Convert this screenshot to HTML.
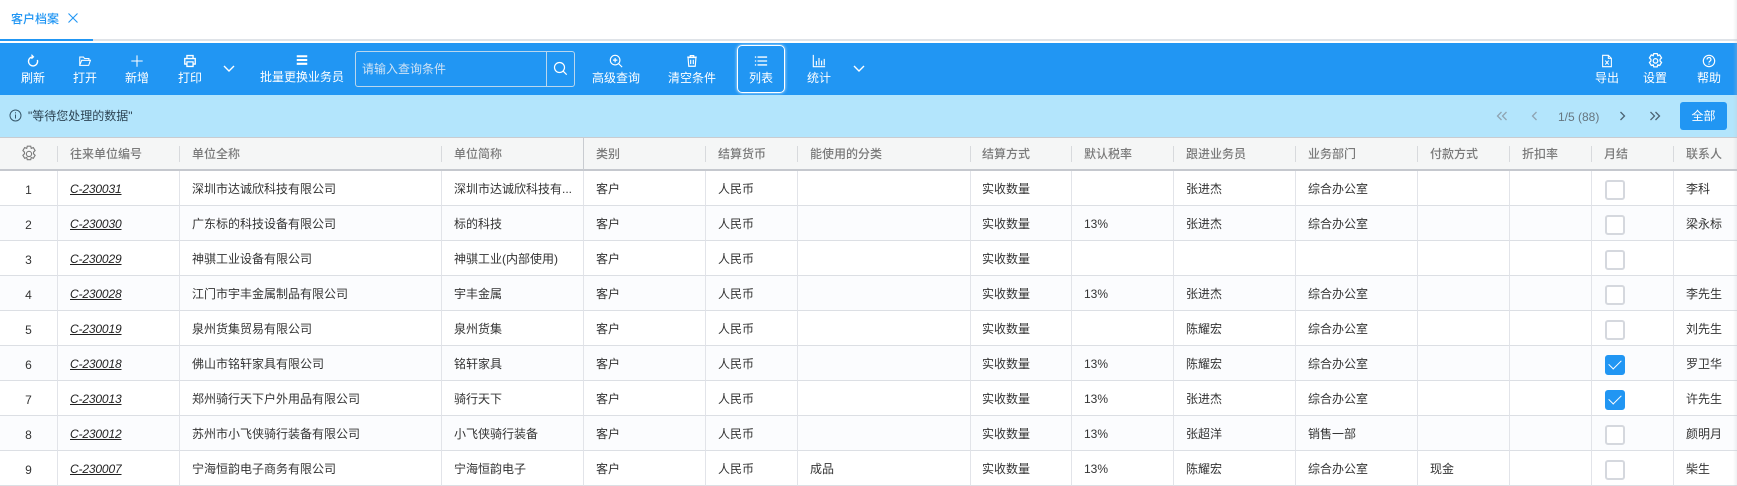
<!DOCTYPE html>
<html><head><meta charset="utf-8"><style>
*{box-sizing:border-box}
html,body{margin:0;padding:0;width:1737px;height:486px;overflow:hidden;background:#fff;font:12px/16px "Liberation Sans","Noto Sans CJK SC",sans-serif;color:#333}
.a{position:absolute}
#tb{position:absolute;left:0;top:43px;width:1737px;height:52px;background:#2196f3;color:#fff}
.it{position:absolute;top:27px;width:100px;margin-left:-50px;text-align:center;line-height:16px;white-space:nowrap}
.ic{position:absolute;width:14px;height:14px;margin-left:-7px;top:11px;fill:none;stroke:#fff;stroke-width:1.2}
#hd{position:absolute;left:0;top:137px;width:1737px;height:34px;background:#f5f6f6;border-top:1px solid #c9ccd1;border-bottom:2px solid #c5c8ce;color:#7a7a7a;font-weight:500}
#hd span{position:absolute;top:8px;white-space:nowrap}
#hd i{position:absolute;top:8px;width:1px;height:16px;background:#d8dadd}
table{position:absolute;left:0;top:171px;width:1737px;border-collapse:separate;border-spacing:0;table-layout:fixed;color:#333}
td{height:35px;padding:1px 12px 0 12px;border-left:1px solid #e2e4e9;border-bottom:1px solid #dcdfe4;white-space:nowrap;overflow:hidden;vertical-align:middle}
td:first-child{border-left:0;text-align:center;padding:4px 0 0}
td:nth-child(8){padding-left:11px}
tr:nth-child(even) td{background:#fbfcfe}
td u{font-style:italic;color:#222;letter-spacing:-.15px}
b{display:block;width:20px;height:20px;border:2px solid #d5d8de;border-radius:3px;background:#fff;margin:3px 0 0 1px}
b.c{background:#2196f3;border-color:#2196f3;position:relative}
b.c:after{content:"";position:absolute;left:2px;top:1px;width:11px;height:6px;border-left:1.4px solid #fff;border-bottom:1.4px solid #fff;transform:rotate(-45deg) translate(-1px,1px);}
</style></head><body>

<div class="a" style="left:11px;top:11px;color:#2196f3;font-weight:500">客户档案</div>
<svg class="a" style="left:67px;top:12px" width="12" height="12" fill="none" stroke="#2196f3" stroke-width="1.1"><path d="M1.5 1.5l9 9M10.5 1.5l-9 9"/></svg>
<div class="a" style="left:0;top:39px;width:1737px;height:2px;background:#dfe3e8"></div>
<div class="a" style="left:0;top:39px;width:93px;height:2px;background:#2196f3"></div>

<div id="tb">
<svg class="ic" style="left:33px" viewBox="0 0 16 16"><path d="M8 3.2a5.2 5.2 0 1 0 5 3.6" stroke-width="1.5"/><path d="M6.2 .8 8.6 3.2 6.2 5.4" stroke-width="1.3"/></svg>
<div class="it" style="left:33px">刷新</div>
<svg class="ic" style="left:85px" viewBox="0 0 16 16"><path d="M2 13V3.5h4.2l1.3 1.6h5V7.2M2 13h10.2l2-5.8H4.200L2 13z"/></svg>
<div class="it" style="left:85px">打开</div>
<svg class="ic" style="left:137px" viewBox="0 0 16 16"><path d="M8 1.500v13M1.500 8h13"/></svg>
<div class="it" style="left:137px">新增</div>
<svg class="ic" style="left:190px" viewBox="0 0 16 16"><path d="M4.500 5V1.800h7V5M4.500 11.500H2V5.200h12v6.300h-2.500M4.500 9h7v5.200h-7z" stroke-width="1.5"/></svg>
<div class="it" style="left:190px">打印</div>
<svg class="a" style="left:222px;top:21px" width="14" height="10" fill="none" stroke="#fff" stroke-width="1.4"><path d="M2 2l5 5 5-5"/></svg>
<svg class="ic" style="left:302px;top:10px" viewBox="0 0 16 16"><path d="M2 2.500h12v2.400H2zM2 6.800h12v2.400H2zM2 11.100h12v2.400H2z" fill="#fff" stroke="none"/></svg>
<div class="it" style="left:302px;top:26px">批量更换业务员</div>
<div class="a" style="left:355px;top:8px;width:220px;height:36px;border:1px solid #b9d7ee;border-radius:3px"></div>
<div class="a" style="left:546px;top:8px;width:1px;height:36px;background:#b9d7ee"></div>
<div class="a" style="left:362px;top:18px;color:#cfe3f5">请输入查询条件</div>
<svg class="a" style="left:553px;top:18px" width="15" height="15" fill="none" stroke="#fff" stroke-width="1.200"><circle cx="6.500" cy="6.500" r="5"/><path d="M10.200 10.200l3.500 3.500"/></svg>

<svg class="ic" style="left:616px" viewBox="0 0 16 16"><circle cx="7" cy="7" r="5.500" stroke-width="1.300"/><path d="M11 11l4 4M7 4.500v5M4.500 7h5" stroke-width="1.300"/></svg>
<div class="it" style="left:616px">高级查询</div>
<svg class="ic" style="left:692px" viewBox="0 0 16 16"><path d="M3.500 4h9l-.8 10H4.300zM2.500 3.500h11M6 3V1.800h4V3M6.500 6.500v5M9.500 6.500v5" stroke-width="1.300"/></svg>
<div class="it" style="left:692px">清空条件</div>
<div class="a" style="left:737px;top:2px;width:47.500px;height:47.500px;border:1.500px solid #fff;border-radius:5px;box-shadow:0 0 3px #cfeaff"></div>
<svg class="ic" style="left:761px" viewBox="0 0 16 16"><path d="M1 3.500h1.500M4 3.500h11M1 8h1.500M4 8h11M1 12.500h1.500M4 12.500h11" stroke-width="1.500"/></svg>
<div class="it" style="left:761px">列表</div>
<svg class="ic" style="left:819px" viewBox="0 0 16 16"><path d="M1.500 1v13.500H15" stroke-width="1.300"/><path d="M5 13V8M8 13V4.500M11 13V7.500M14 13V5.500" stroke-width="1.300"/></svg>
<div class="it" style="left:819px">统计</div>
<svg class="a" style="left:852px;top:21px" width="14" height="10" fill="none" stroke="#fff" stroke-width="1.4"><path d="M2 2l5 5 5-5"/></svg>

<svg class="ic" style="left:1607px" viewBox="0 0 16 16"><path d="M3 1.500h6.500L13 5v9.500H3zM9.500 1.500V5H13" stroke-width="1.200"/><path d="M6 7.500l4 4.500M10 7.500l-4 4.500" stroke-width="1.100"/></svg>
<div class="it" style="left:1607px">导出</div>
<svg class="ic" style="left:1655px;top:10px;width:15px;height:16px;margin-left:-7.500px" viewBox="2 1 12 14"><path d="M6.500 1.500h3l.5 1.800 1.700-.6 1.600 2.600-1.300 1.300v1.400l1.300 1.300-1.600 2.600-1.700-.6-.5 1.800h-3l-.5-1.800-1.700.6-1.600-2.600 1.300-1.300V6.600L2.700 5.300l1.600-2.600 1.700.6z" stroke-width="1.100"/><circle cx="8" cy="7.900" r="2" stroke-width="1.100"/></svg>
<div class="it" style="left:1655px">设置</div>
<svg class="ic" style="left:1709px" viewBox="0 0 16 16"><circle cx="8" cy="8" r="6.500" stroke-width="1.300"/><path d="M5.800 6.300a2.200 2.200 0 1 1 3.300 1.800c-.8.500-1.100.9-1.100 1.800" stroke-width="1.300"/><path d="M8 11v1.300" stroke-width="1.300"/></svg>
<div class="it" style="left:1709px">帮助</div>
</div>

<div class="a" style="left:0;top:95px;width:1737px;height:42px;background:#b3e5fc"></div>
<svg class="a" style="left:9px;top:109px" width="13" height="13" fill="none" stroke="#37586b" stroke-width="1"><circle cx="6.500" cy="6.500" r="5.500"/><path d="M6.500 5.500v4M6.500 3.200v1.200"/></svg>
<div class="a" style="left:28px;top:108px;color:#2c4353">"等待您处理的数据"</div>
<svg class="a" style="left:1496px;top:111px" width="12" height="10" fill="none" stroke="#8fa4b2" stroke-width="1.300"><path d="M5.500 1 1.500 5l4 4M10.500 1l-4 4 4 4"/></svg>
<svg class="a" style="left:1531px;top:111px" width="7" height="10" fill="none" stroke="#8fa4b2" stroke-width="1.300"><path d="M5.500 1 1.500 5l4 4"/></svg>
<div class="a" style="left:1558px;top:109px;color:#66757f;white-space:nowrap">1/5 (88)</div>
<svg class="a" style="left:1619px;top:111px" width="7" height="10" fill="none" stroke="#4d6473" stroke-width="1.300"><path d="M1.500 1l4 4-4 4"/></svg>
<svg class="a" style="left:1649px;top:111px" width="12" height="10" fill="none" stroke="#4d6473" stroke-width="1.300"><path d="M1.500 1l4 4-4 4M6.500 1l4 4-4 4"/></svg>
<div class="a" style="left:1680px;top:102px;width:47px;height:28px;background:#2196f3;border-radius:3px;color:#fff;text-align:center;line-height:28px">全部</div>

<div id="hd">
<svg class="a" style="left:21px;top:7px" width="16" height="17" viewBox="1.500 0 13 15" fill="none" stroke="#7c7c7c" stroke-width="1"><path d="M6.500 1h3l.5 2 1.800-.7 1.600 2.600-1.400 1.400v1.400l1.400 1.400-1.600 2.600-1.800-.7-.5 2H6.500l-.5-2-1.800.7-1.600-2.600 1.400-1.400V6.300L2.600 4.900l1.600-2.600L6 3z"/><circle cx="8" cy="7.900" r="2.300"/></svg>
<i style="left:57px"></i><span style="left:70px">往来单位编号</span>
<i style="left:179px"></i><span style="left:192px">单位全称</span>
<i style="left:441px"></i><span style="left:454px">单位简称</span>
<i style="left:583px;top:0;height:32px;background:#c9ccd1"></i><span style="left:596px">类别</span>
<i style="left:705px"></i><span style="left:718px">结算货币</span>
<i style="left:797px"></i><span style="left:810px">能使用的分类</span>
<i style="left:970px"></i><span style="left:982px">结算方式</span>
<i style="left:1071px"></i><span style="left:1084px">默认税率</span>
<i style="left:1173px"></i><span style="left:1186px">跟进业务员</span>
<i style="left:1295px"></i><span style="left:1308px">业务部门</span>
<i style="left:1417px"></i><span style="left:1430px">付款方式</span>
<i style="left:1509px"></i><span style="left:1522px">折扣率</span>
<i style="left:1591px"></i><span style="left:1604px">月结</span>
<i style="left:1673px"></i><span style="left:1686px">联系人</span>
</div>

<table>
<colgroup><col style="width:57px"><col style="width:122px"><col style="width:262px"><col style="width:142px"><col style="width:122px"><col style="width:92px"><col style="width:173px"><col style="width:101px"><col style="width:102px"><col style="width:122px"><col style="width:122px"><col style="width:92px"><col style="width:82px"><col style="width:82px"><col style="width:64px"></colgroup>
<tr><td>1</td><td><u>C-230031</u></td><td>深圳市达诚欣科技有限公司</td><td>深圳市达诚欣科技有...</td><td>客户</td><td>人民币</td><td></td><td>实收数量</td><td></td><td>张进杰</td><td>综合办公室</td><td></td><td></td><td><b></b></td><td>李科</td></tr>
<tr><td>2</td><td><u>C-230030</u></td><td>广东标的科技设备有限公司</td><td>标的科技</td><td>客户</td><td>人民币</td><td></td><td>实收数量</td><td>13%</td><td>张进杰</td><td>综合办公室</td><td></td><td></td><td><b></b></td><td>梁永标</td></tr>
<tr><td>3</td><td><u>C-230029</u></td><td>神骐工业设备有限公司</td><td>神骐工业(内部使用)</td><td>客户</td><td>人民币</td><td></td><td>实收数量</td><td></td><td></td><td></td><td></td><td></td><td><b></b></td><td></td></tr>
<tr><td>4</td><td><u>C-230028</u></td><td>江门市宇丰金属制品有限公司</td><td>宇丰金属</td><td>客户</td><td>人民币</td><td></td><td>实收数量</td><td>13%</td><td>张进杰</td><td>综合办公室</td><td></td><td></td><td><b></b></td><td>李先生</td></tr>
<tr><td>5</td><td><u>C-230019</u></td><td>泉州货集贸易有限公司</td><td>泉州货集</td><td>客户</td><td>人民币</td><td></td><td>实收数量</td><td></td><td>陈耀宏</td><td>综合办公室</td><td></td><td></td><td><b></b></td><td>刘先生</td></tr>
<tr><td>6</td><td><u>C-230018</u></td><td>佛山市铭轩家具有限公司</td><td>铭轩家具</td><td>客户</td><td>人民币</td><td></td><td>实收数量</td><td>13%</td><td>陈耀宏</td><td>综合办公室</td><td></td><td></td><td><b class="c"></b></td><td>罗卫华</td></tr>
<tr><td>7</td><td><u>C-230013</u></td><td>郑州骑行天下户外用品有限公司</td><td>骑行天下</td><td>客户</td><td>人民币</td><td></td><td>实收数量</td><td>13%</td><td>张进杰</td><td>综合办公室</td><td></td><td></td><td><b class="c"></b></td><td>许先生</td></tr>
<tr><td>8</td><td><u>C-230012</u></td><td>苏州市小飞侠骑行装备有限公司</td><td>小飞侠骑行装备</td><td>客户</td><td>人民币</td><td></td><td>实收数量</td><td>13%</td><td>张超洋</td><td>销售一部</td><td></td><td></td><td><b></b></td><td>颜明月</td></tr>
<tr><td>9</td><td><u>C-230007</u></td><td>宁海恒韵电子商务有限公司</td><td>宁海恒韵电子</td><td>客户</td><td>人民币</td><td>成品</td><td>实收数量</td><td>13%</td><td>陈耀宏</td><td>综合办公室</td><td>现金</td><td></td><td><b></b></td><td>柴生</td></tr>
</table>
<div class="a" style="left:1733px;top:0;width:4px;height:486px;background:linear-gradient(90deg,rgba(255,255,255,0),rgba(190,195,205,.25))"></div>
</body></html>
